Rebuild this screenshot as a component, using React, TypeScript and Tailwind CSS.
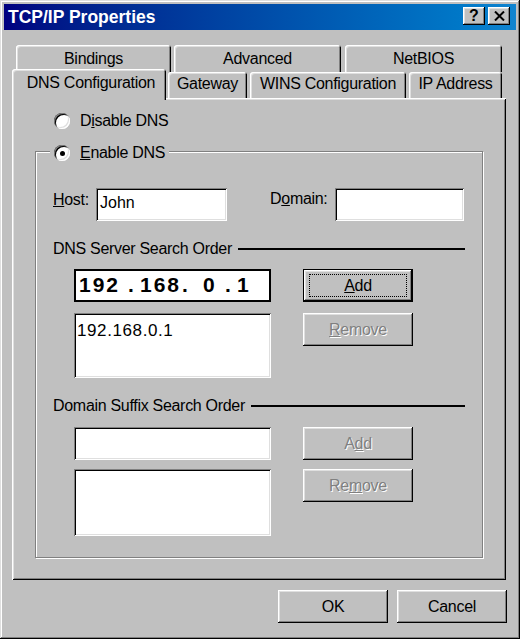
import React from "react";

const raised =
  "bg-[#c0c0c0] shadow-[inset_-1px_-1px_#000,inset_1px_1px_#fff,inset_-2px_-2px_#808080,inset_2px_2px_#dfdfdf]";
const sunken =
  "bg-white shadow-[inset_1px_1px_#808080,inset_-1px_-1px_#fff,inset_2px_2px_#000,inset_-2px_-2px_#dfdfdf]";
const tabShadow =
  "bg-[#c0c0c0] rounded-t-[3px] shadow-[inset_1px_1px_#fff,inset_-1px_0_#000,inset_2px_2px_#dfdfdf,inset_-2px_0_#808080]";

function Radio({ checked }: { checked?: boolean }) {
  return (
    <div className="w-[16px] h-[16px] flex-none rounded-full bg-white shadow-[inset_1px_1px_#808080,inset_-1px_-1px_#fff,inset_2px_2px_#000,inset_-2px_-2px_#dfdfdf] flex items-center justify-center">
      {checked && <div className="w-[5px] h-[5px] rounded-full bg-black" />}
    </div>
  );
}

function DisabledButton({ children }: { children: React.ReactNode }) {
  return (
    <div
      className={`ml-[32px] w-[110px] h-[33px] flex items-center justify-center text-[#808080] [text-shadow:1px_1px_0_#fff] ${raised}`}
    >
      <span className="leading-[18px]">{children}</span>
    </div>
  );
}

function Button({ children }: { children: React.ReactNode }) {
  return (
    <div className={`w-[110px] h-[33px] flex items-center justify-center ${raised}`}>
      <span className="leading-[18px]">{children}</span>
    </div>
  );
}

export default function App() {
  return (
    <div className="w-[520px] h-[639px] bg-[#c0c0c0] p-[4px] font-['Liberation_Sans',Arial,sans-serif] text-[16px] tracking-[-0.3px] text-black flex flex-col shadow-[inset_-1px_-1px_#000,inset_1px_1px_#dfdfdf,inset_-2px_-2px_#808080,inset_2px_2px_#fff]">
      {/* Title bar */}
      <div className="h-[26px] flex-none flex items-start justify-between bg-linear-to-r from-[#000080] to-[#1084d0] pl-[4px] pr-[6px]">
        <span className="text-white font-bold text-[17.5px] leading-[26px] tracking-normal">
          TCP/IP Properties
        </span>
        <div className="flex gap-[3px] pt-[3px]">
          <div className={`w-[22px] h-[18px] flex items-center justify-center ${raised}`}>
            <span className="font-bold text-[16px] leading-none tracking-normal">?</span>
          </div>
          <div className={`w-[22px] h-[18px] flex items-center justify-center ${raised}`}>
            <svg width="11" height="10" viewBox="0 0 11 10">
              <path d="M1 0.5L10 9.5M10 0.5L1 9.5" stroke="#000" strokeWidth="2" fill="none" />
            </svg>
          </div>
        </div>
      </div>

      {/* Body */}
      <div className="pl-[8px] pr-[9px] flex flex-col">
        <div className="mt-[15px] flex flex-col">
          {/* back tab row */}
          <div className="flex h-[27px]">
            <div className={`ml-[4px] w-[155px] h-[27px] pt-[5px] text-center leading-[18px] ${tabShadow}`}>
              Bindings
            </div>
            <div className={`ml-[3px] w-[167px] h-[27px] pt-[5px] text-center leading-[18px] ${tabShadow}`}>
              Advanced
            </div>
            <div className={`ml-[4px] w-[157px] h-[27px] pt-[5px] text-center leading-[18px] ${tabShadow}`}>
              NetBIOS
            </div>
          </div>
          {/* front tab row */}
          <div className="flex h-[26px] items-start">
            <div
              className={`relative z-10 -mt-[3px] w-[154px] h-[31px] pt-[5px] pl-[4px] text-center leading-[18px] ${tabShadow}`}
            >
              DNS Configuration
            </div>
            <div className={`ml-[2px] w-[79px] h-[26px] pt-[3px] text-center leading-[18px] ${tabShadow}`}>
              Gateway
            </div>
            <div className={`ml-[3px] w-[156px] h-[26px] pt-[3px] text-center leading-[18px] ${tabShadow}`}>
              WINS Configuration
            </div>
            <div className={`ml-[3px] w-[93px] h-[26px] pt-[3px] text-center leading-[18px] ${tabShadow}`}>
              IP Address
            </div>
          </div>

          {/* panel */}
          <div className="w-[494px] h-[482px] bg-[#c0c0c0] flex flex-col shadow-[inset_1px_1px_#fff,inset_-1px_-1px_#000,inset_2px_2px_#dfdfdf,inset_-2px_-2px_#808080]">
            <div className="mt-[15px] ml-[42px] h-[16px] flex items-center">
              <Radio />
              <span className="ml-[10px] leading-[16px]">
                D<u>i</u>sable DNS
              </span>
            </div>

            {/* group box */}
            <div className="mt-[22px] ml-[23px] w-[448px] h-[407px] border border-[#808080] shadow-[inset_1px_1px_#fff,1px_1px_#fff] flex flex-col">
              <div className="-mt-[7px] ml-[14px] self-start h-[16px] px-[4px] bg-[#c0c0c0] flex items-center">
                <Radio checked />
                <span className="ml-[10px] leading-[16px]">
                  <u>E</u>nable DNS
                </span>
              </div>

              {/* Host / Domain */}
              <div className="mt-[27px] h-[33px] flex items-start">
                <span className="ml-[17px] w-[43px] mt-[3px] leading-[18px]">
                  <u>H</u>ost:
                </span>
                <div className={`w-[131px] h-[33px] pl-[4px] pb-[3px] flex items-center tracking-normal ${sunken}`}>
                  John
                </div>
                <span className="ml-[43px] w-[65px] mt-[2px] leading-[18px]">
                  D<u>o</u>main:
                </span>
                <div className={`w-[129px] h-[33px] ${sunken}`} />
              </div>

              {/* DNS Server Search Order */}
              <div className="mt-[19px] mx-[17px] h-[18px] flex items-center">
                <span className="leading-[18px] whitespace-nowrap">DNS Server Search Order</span>
                <div className="flex-1 h-[2px] bg-black ml-[6px]" />
              </div>

              <div className="mt-[11px] flex items-start">
                <div className="ml-[38px] w-[197px] h-[33px] bg-white border-2 border-black flex items-center pb-[2px] font-bold text-[21px] tracking-[2px] leading-[24px]">
                  <span className="ml-[3px] w-[49px] flex-none">192</span>
                  <span className="w-[6px] flex-none">.</span>
                  <span className="ml-[6px] w-[42px] flex-none">168</span>
                  <span className="w-[6px] flex-none">.</span>
                  <span className="ml-[15px] w-[16px] flex-none">0</span>
                  <span className="ml-[6px] w-[6px] flex-none">.</span>
                  <span className="ml-[6px] flex-none">1</span>
                </div>
                <div className="ml-[32px] w-[110px] h-[33px] bg-[#c0c0c0] px-[6px] py-[5px] flex shadow-[inset_0_0_0_1px_#000,inset_-2px_-2px_#000,inset_2px_2px_#fff,inset_-3px_-3px_#808080,inset_3px_3px_#dfdfdf]">
                  <div className="flex-1 border border-dotted border-black flex items-center justify-center">
                    <span className="leading-[18px]">
                      <u>A</u>dd
                    </span>
                  </div>
                </div>
              </div>

              <div className="mt-[11px] flex items-start">
                <div className={`ml-[38px] w-[197px] h-[65px] pl-[3px] pt-[9px] text-[17px] tracking-[0.6px] leading-[18px] ${sunken}`}>
                  192.168.0.1
                </div>
                <DisabledButton>
                  <u>R</u>emove
                </DisabledButton>
              </div>

              {/* Domain Suffix Search Order */}
              <div className="mt-[19px] mx-[17px] h-[18px] flex items-center">
                <span className="leading-[18px] whitespace-nowrap">Domain Suffix Search Order</span>
                <div className="flex-1 h-[2px] bg-black ml-[6px]" />
              </div>

              <div className="mt-[12px] flex items-start">
                <div className={`ml-[38px] w-[197px] h-[33px] ${sunken}`} />
                <DisabledButton>
                  A<u>d</u>d
                </DisabledButton>
              </div>

              <div className="mt-[9px] flex items-start">
                <div className={`ml-[38px] w-[197px] h-[67px] ${sunken}`} />
                <DisabledButton>
                  Re<u>m</u>ove
                </DisabledButton>
              </div>
            </div>
          </div>
        </div>

        {/* OK / Cancel */}
        <div className="mt-[10px] flex justify-end gap-[9px]">
          <Button>OK</Button>
          <Button>Cancel</Button>
        </div>
      </div>
    </div>
  );
}
